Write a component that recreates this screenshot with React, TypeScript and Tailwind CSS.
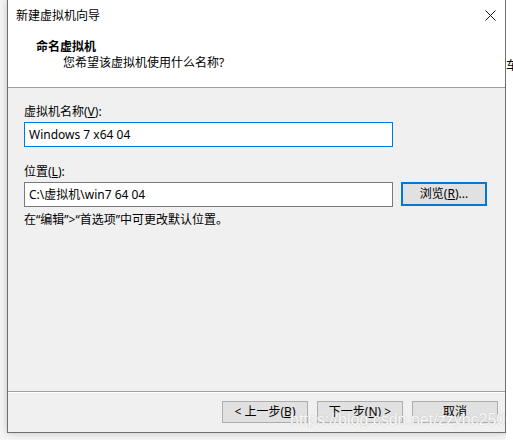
import React from "react"

const font = { fontFamily: '"Noto Sans", "Noto Sans CJK SC", sans-serif' }

function Btn({ children }: { children: React.ReactNode }) {
  return (
    <div className="w-[86px] h-[22px] flex items-center justify-center bg-[#e1e1e1] border border-[#adadad] text-[12px] text-black">
      {children}
    </div>
  )
}

export default function App() {
  return (
    <div className="relative w-[513px] h-[440px] overflow-hidden bg-[#f6f6f6]" style={font}>
      <div className="flex h-full">
        {/* Dialog */}
        <div className="ml-[7px] w-[499px] h-[433px] flex flex-col border border-t-0 border-[#6e6e6e] bg-[#f0f0f0] shadow-[0_0_8px_rgba(0,0,0,0.22)]">
          {/* Title bar */}
          <div className="h-[31px] flex items-center justify-between bg-white pl-[8px] pr-[9px]">
            <span className="text-[12px] text-black leading-none">新建虚拟机向导</span>
            <svg width="11" height="11" viewBox="0 0 11 11">
              <path d="M0.5 0.5 L10.5 10.5 M10.5 0.5 L0.5 10.5" stroke="#111" strokeWidth="1" />
            </svg>
          </div>

          {/* Header */}
          <div className="h-[56px] bg-white pt-[8px] pl-[28px]">
            <div className="text-[12px] font-bold leading-[16px] text-black">命名虚拟机</div>
            <div className="text-[12px] leading-[16px] text-black pl-[27px]">您希望该虚拟机使用什么名称?</div>
          </div>
          <div className="h-px bg-[#a0a0a0]" />

          {/* Body */}
          <div className="flex-1 flex flex-col pl-[16px] pt-[16px]">
            <div className="text-[12px] leading-[16px] text-black">
              虚拟机名称(<u>V</u>):
            </div>
            <div className="mt-[2px] w-[369px] h-[25px] border border-[#0078d7] bg-white flex items-center pl-[4px] text-[12px] text-black">
              Windows 7 x64 04
            </div>

            <div className="mt-[17px] text-[12px] leading-[16px] text-black">
              位置(<u>L</u>):
            </div>
            <div className="mt-[2px] flex items-start gap-[8px]">
              <div className="w-[369px] h-[25px] border border-[#7a7a7a] bg-white flex items-center pl-[4px] text-[12px] text-black">
                C:\虚拟机\win7 64 04
              </div>
              <div className="w-[86px] h-[24px] flex items-center justify-center bg-[#e1e1e1] border-2 border-[#0078d7] text-[12px] text-black">
                浏览(<u>R</u>)...
              </div>
            </div>
            <div className="mt-[5px] text-[12px] leading-[16px] text-black">
              在“编辑”&gt;“首选项”中可更改默认位置。
            </div>
          </div>

          {/* Footer */}
          <div className="h-px bg-[#a0a0a0]" />
          <div className="h-px bg-white" />
          <div className="h-[39px] flex justify-end gap-[9px] pt-[8px] pr-[7px]">
            <Btn>
              &lt; 上一步(<u>B</u>)
            </Btn>
            <Btn>
              下一步(<u>N</u>) &gt;
            </Btn>
            <Btn>取消</Btn>
          </div>
        </div>

        {/* Background strip */}
        <div className="flex-1 bg-white pt-[52px] overflow-hidden">
          <span className="text-[12px] text-black leading-none">车</span>
        </div>
      </div>

      {/* Watermark */}
      <div
        className="absolute left-[290px] top-[410px] text-[16px] leading-[20px] text-white/90"
        style={{ fontFamily: '"Liberation Sans", sans-serif', textShadow: "0 0 1px #c0c0c0, 0 0 1px #c0c0c0" }}
      >
        https://blog.csdn.net/zzyhc250
      </div>
    </div>
  )
}
